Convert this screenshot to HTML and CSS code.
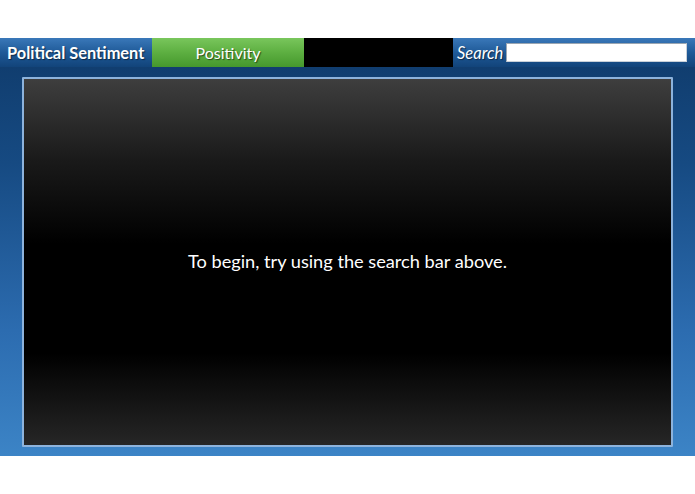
FILE: index.html
```html
<!DOCTYPE html>
<html>
<head>
<meta charset="utf-8">
<link rel="stylesheet" href="styles.css">
</head>
<body>
<div class="top-space"></div>
<div class="app">
  <div class="header">
    <div class="title">Political Sentiment</div>
    <div class="tab">Positivity</div>
    <div class="blank"></div>
    <div class="search">
      <span class="search-label">Search</span>
      <input class="search-input" type="text">
    </div>
  </div>
  <div class="stage">
    <div class="panel">
      <p class="message">To begin, try using the search bar above.</p>
    </div>
  </div>
</div>
</body>
</html>
```

FILE: styles.css
```css
html, body {
  margin: 0;
  padding: 0;
  background: #ffffff;
  font-family: Lato, "Liberation Sans", sans-serif;
}
.top-space {
  height: 38px;
}
.app {
  height: 418px;
  display: flex;
  flex-direction: column;
  background: linear-gradient(to bottom, #0f3a6a 0%, #164a82 30%, #2c6cb0 70%, #3c84c6 100%);
}
.header {
  height: 29px;
  display: flex;
  align-items: stretch;
}
.title {
  width: 152px;
  display: flex;
  align-items: center;
  padding-left: 7px;
  box-sizing: border-box;
  color: #ffffff;
  font-weight: bold;
  font-size: 16.4px;
  background: linear-gradient(to bottom, #3a78b9 0%, #1f5a98 50%, #12447a 100%);
  text-shadow: 1px 1px 1px rgba(0,0,0,0.5);
}
.tab {
  width: 152px;
  display: flex;
  align-items: center;
  justify-content: center;
  color: #ffffff;
  font-size: 16px;
  background: linear-gradient(to bottom, #79c65c 0%, #5daf41 50%, #45982d 100%);
  text-shadow: 1px 1px 1px rgba(0,0,0,0.55);
}
.blank {
  width: 149px;
  background: #000000;
}
.search {
  flex: 1;
  display: flex;
  align-items: center;
  padding-left: 4px;
  gap: 3px;
  background: linear-gradient(to bottom, #3a78b9 0%, #1f5a98 50%, #12447a 100%);
}
.search-label {
  color: #ffffff;
  font-style: italic;
  font-size: 16.5px;
  text-shadow: 1px 1px 1px rgba(0,0,0,0.5);
}
.search-input {
  width: 181px;
  height: 19px;
  box-sizing: border-box;
  margin: 0;
  padding: 0 2px;
  border: 1px solid #9aa6b2;
  border-right-color: #c9d0d8;
  border-bottom-color: #c9d0d8;
  background: #ffffff;
  outline: none;
}
.stage {
  flex: 1;
  padding: 10px 22px 9px 22px;
  display: flex;
}
.panel {
  flex: 1;
  border: 2px solid #8db3dc;
  border-radius: 1px;
  background: linear-gradient(to bottom, #3e3e3e 0%, #1a1a1a 22%, #000000 45%, #000000 75%, #1a1a1a 92%, #262626 100%);
  display: flex;
  align-items: center;
  justify-content: center;
}
.message {
  margin: 0;
  color: #ffffff;
  font-size: 18.2px;
  position: relative;
  top: -1px;
}
```
